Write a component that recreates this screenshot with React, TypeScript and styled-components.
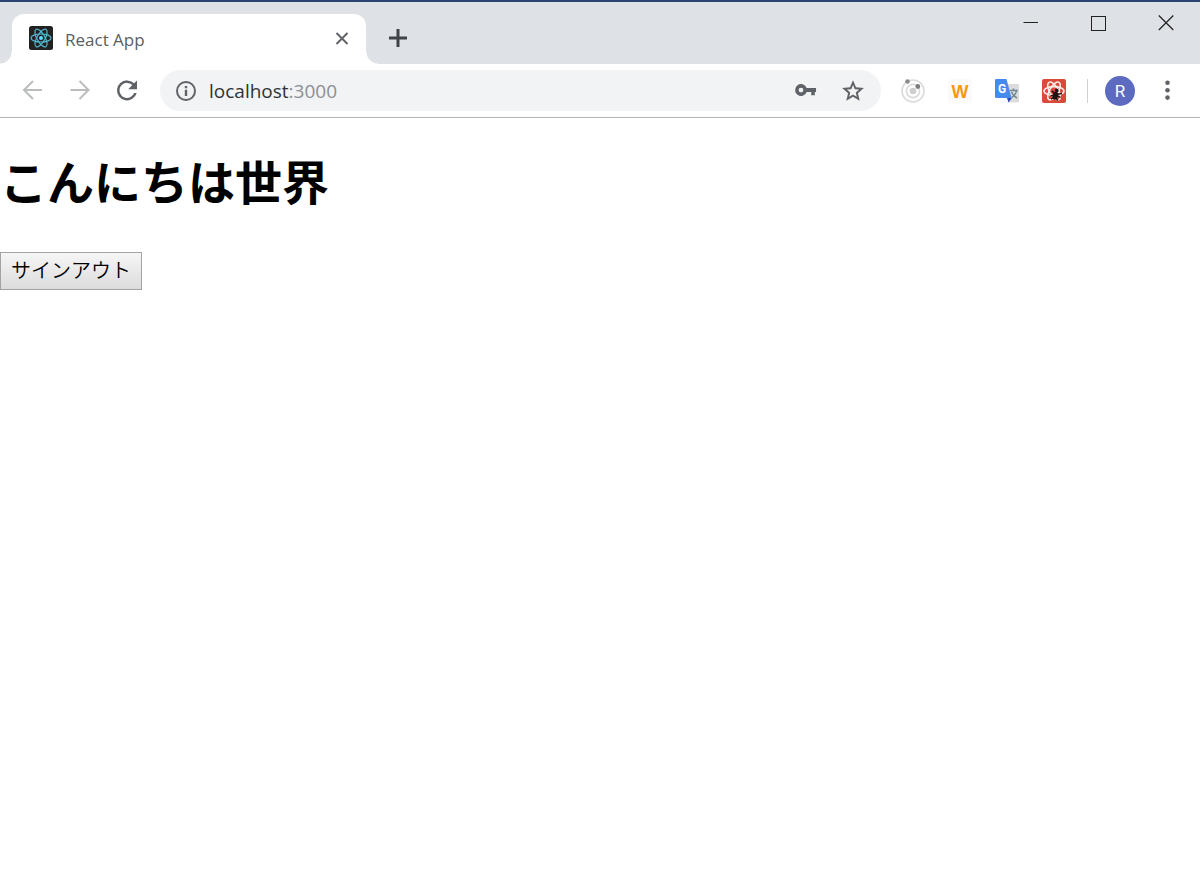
import React from 'react';
import styled, { createGlobalStyle } from 'styled-components';

const GlobalStyle = createGlobalStyle`
  * { box-sizing: border-box; }
  body { margin: 0; background: #fff; font-family: "Open Sans", "Noto Sans CJK JP", sans-serif; }
`;

const Browser = styled.div`
  display: flex;
  flex-direction: column;
  min-height: 100vh;
`;

const TabStrip = styled.header`
  display: flex;
  height: 64px;
  padding-left: 12px;
  background: #dee1e6;
  border-top: 2px solid #2c4270;
`;

const Tab = styled.div`
  position: relative;
  display: flex;
  align-items: center;
  align-self: flex-end;
  width: 354px;
  height: 50px;
  padding: 0 12px 2px 17px;
  gap: 12px;
  background: #fff;
  border-radius: 12px 12px 0 0;

  &::before,
  &::after {
    content: '';
    position: absolute;
    bottom: 0;
    width: 12px;
    height: 12px;
  }
  &::before {
    right: 100%;
    background: radial-gradient(circle at 0 0, #dee1e6 11px, #fff 12px);
  }
  &::after {
    left: 100%;
    background: radial-gradient(circle at 100% 0, #dee1e6 11px, #fff 12px);
  }
`;

const TabTitle = styled.span`
  flex: 1;
  padding-top: 4px;
  font-size: 17px;
  line-height: 24px;
  color: #5a5d61;
`;

const IconButton = styled.button<{ $width?: number; $color?: string }>`
  display: flex;
  align-items: center;
  justify-content: center;
  flex: none;
  width: ${(p) => p.$width ?? 47}px;
  height: 42px;
  padding: 0;
  border: 0;
  background: none;
  color: ${(p) => p.$color ?? '#5f6368'};

  svg { display: block; }
`;

const NewTab = styled(IconButton)`
  align-self: flex-end;
  margin: 0 0 5px 18px;
`;

const WindowControls = styled.div`
  display: flex;
  margin-left: auto;
`;

const Toolbar = styled.nav`
  display: flex;
  align-items: center;
  height: 54px;
  padding: 0 9px;
  border-bottom: 1px solid #b6b4b6;
`;

const AddressBar = styled.form`
  display: flex;
  align-items: center;
  flex: 1;
  min-width: 0;
  height: 41px;
  margin: 0 8px 0 10px;
  padding: 0 5px 0 2px;
  background: #f1f3f4;
  border-radius: 21px;
`;

const AddressField = styled.input<{ $color: string }>`
  field-sizing: content;
  flex: none;
  min-width: 0;
  padding: 0;
  border: 0;
  outline: 0;
  background: none;
  font-family: inherit;
  font-size: 19px;
  line-height: 28px;
  color: ${(p) => p.$color};
`;

const Spacer = styled.div`
  flex: 1;
`;

const Divider = styled.div`
  width: 1px;
  height: 24px;
  margin: 0 17px 0 10px;
  background: #cfd1d4;
`;

const Avatar = styled.button`
  flex: none;
  width: 30px;
  height: 30px;
  margin-right: 9px;
  padding: 0;
  border: 0;
  border-radius: 50%;
  background: #5c6bc0;
  color: #fff;
  font-family: Roboto, sans-serif;
  font-size: 17px;
  line-height: 30px;
`;

const Page = styled.main`
  flex: 1;
`;

const Heading = styled.h1`
  margin: 32px 0 38px;
  font-size: 47px;
  line-height: 64px;
  color: #000;
`;

const SignOutButton = styled.button`
  height: 38px;
  padding: 0 10px 2px;
  border: 1px solid #a3a3a3;
  border-radius: 0;
  background: linear-gradient(#f6f6f6, #dcdcdc);
  font-family: "Noto Sans CJK JP", sans-serif;
  font-size: 20px;
  font-weight: 350;
  line-height: 32px;
  color: #000;
`;

const Glyph = ({ d, size = 24 }: { d: string; size?: number }) => (
  <svg width={size} height={size} viewBox="0 0 24 24" fill="currentColor" aria-hidden="true">
    <path d={d} fillRule="evenodd" />
  </svg>
);

const ReactFavicon = () => (
  <svg width="24" height="24" viewBox="0 0 24 24" aria-hidden="true">
    <rect width="24" height="24" rx="2.5" fill="#222" />
    <g fill="none" stroke="#53b9d1" strokeWidth="1.2">
      {[0, 60, 120].map((a) => (
        <ellipse key={a} cx="12" cy="12" rx="10" ry="4" transform={`rotate(${a} 12 12)`} />
      ))}
    </g>
    <circle cx="12" cy="12" r="2" fill="#61dafb" />
  </svg>
);

const OrbitIcon = () => (
  <svg width="24" height="24" viewBox="0 0 24 24" aria-hidden="true">
    <g fill="none" stroke="#dadada" strokeWidth="1.6">
      <circle cx="12" cy="12" r="11" />
      <circle cx="12" cy="12" r="6.6" />
    </g>
    <circle cx="12" cy="12" r="3.3" fill="#cfcfcf" />
    <circle cx="6.5" cy="2.5" r="2.3" fill="#8a8a8a" />
    <circle cx="16.8" cy="7.5" r="2.4" fill="#7d7d7d" />
  </svg>
);

const LetterWIcon = () => (
  <svg width="24" height="24" viewBox="0 0 24 24" aria-hidden="true">
    <rect width="24" height="24" fill="#fafafa" />
    <text x="12" y="19" textAnchor="middle" fontFamily="Liberation Sans, sans-serif" fontWeight="700" fontSize="18" fill="#f9980f">W</text>
  </svg>
);

const TranslateIcon = () => (
  <svg width="24" height="24" viewBox="0 0 24 24" aria-hidden="true">
    <path d="M10 5h13a1 1 0 0 1 1 1v16.5a1 1 0 0 1-1 1H13.5z" fill="#dcdcdc" />
    <path d="M12 19h5l-3.500 4.500z" fill="#3349b8" />
    <path d="M1.200 0h10.300l5 19H1.200A1.200 1.200 0 0 1 0 17.800V1.200A1.200 1.200 0 0 1 1.200 0z" fill="#4889f0" />
    <path d="M14.800 11.500h8M18.500 9.500v2M21.500 11.500c-.5 3.200-2.500 5.500-5 7.200M16.500 13c1 2.600 3 4.700 5.500 6" fill="none" stroke="#6f8894" strokeWidth="1.500" />
    <text x="3" y="14" fontFamily="Roboto, sans-serif" fontWeight="700" fontSize="12" fill="#fff">G</text>
  </svg>
);

const ReactBugIcon = () => (
  <svg width="24" height="24" viewBox="0 0 24 24" aria-hidden="true">
    <rect width="24" height="24" rx="2" fill="#d94a3b" />
    <g fill="none" stroke="#fbe9e7" strokeWidth="1.600">
      {[0, 60, 120].map((a) => (
        <ellipse key={a} cx="12" cy="12" rx="10" ry="4.400" transform={`rotate(${a} 12 12)`} />
      ))}
    </g>
    <g transform="rotate(20 14 15)" fill="#1d1313" stroke="#1d1313">
      <ellipse cx="14" cy="16.800" rx="2.800" ry="4" stroke="none" />
      <circle cx="13.500" cy="11.500" r="1.900" stroke="none" />
      <path d="M9 13.500l4 1.500M9.500 18.500l3-1.500M11 21.500l1.500-2M19.500 12.500L15 15M19.500 16.500h-4M18 20.500L15.500 19" fill="none" strokeWidth="1.400" />
    </g>
  </svg>
);

export default function App() {
  return (
    <Browser>
      <GlobalStyle />
      <TabStrip>
        <Tab>
          <ReactFavicon />
          <TabTitle>React App</TabTitle>
          <IconButton $width={24} aria-label="Close tab">
            <svg width="24" height="24" fill="none" stroke="currentColor" strokeWidth="2">
              <path d="M6.500 7l11 11M17.500 7l-11 11" />
            </svg>
          </IconButton>
        </Tab>
        <NewTab $width={28} $color="#3f4347" aria-label="New tab">
          <svg width="20" height="20" fill="none" stroke="currentColor" strokeWidth="3">
            <path d="M10 1v18M1 10h18" />
          </svg>
        </NewTab>
        <WindowControls>
          <IconButton $width={68} $color="#222" aria-label="Minimize">
            <svg width="16" height="16" fill="none" stroke="currentColor">
              <path d="M1.500 7.500h14.500" />
            </svg>
          </IconButton>
          <IconButton $width={68} $color="#222" aria-label="Maximize">
            <svg width="16" height="16" fill="none" stroke="currentColor">
              <path d="M1 1h14v14h-14z" shapeRendering="crispEdges" />
            </svg>
          </IconButton>
          <IconButton $width={68} $color="#222" aria-label="Close window">
            <svg width="16" height="16" fill="none" stroke="currentColor" strokeWidth="1.200">
              <path d="M.800.500l14.500 14.500M15.300.500L.800 15" />
            </svg>
          </IconButton>
        </WindowControls>
      </TabStrip>
      <Toolbar>
        <IconButton $color="#babcbe" aria-label="Back">
          <svg width="24" height="24" fill="none" stroke="currentColor" strokeWidth="2">
            <path d="M21 11H3.500M12 2l-9 9 9 9" />
          </svg>
        </IconButton>
        <IconButton $color="#babcbe" aria-label="Forward">
          <svg width="24" height="24" fill="none" stroke="currentColor" strokeWidth="2">
            <path d="M2.500 11H20M11.500 2l9 9-9 9" />
          </svg>
        </IconButton>
        <IconButton aria-label="Reload">
          <Glyph size={30} d="M17.650 5.850A7.960 7.960 0 0 0 12 3.500a8 8 0 1 0 7.730 10h-2.080A6 6 0 1 1 12 5.500c1.660 0 3.140.690 4.220 1.780L13 10.500h7v-7z" />
        </IconButton>
        <AddressBar onSubmit={(e) => e.preventDefault()}>
          <IconButton type="button" aria-label="Site information">
            <Glyph d="M10.800 7h2.400v2.200h-2.400zM10.800 10.800h2.400V17h-2.400zM12 2a10 10 0 1 0 0 20 10 10 0 0 0 0-20zm0 18a8 8 0 1 1 0-16 8 8 0 0 1 0 16z" />
          </IconButton>
          <AddressField $color="#2f3337" aria-label="Host" defaultValue="localhost" />
          <AddressField $color="#8b8f94" aria-label="Port" defaultValue=":3000" />
          <Spacer />
          <IconButton type="button" aria-label="Saved passwords">
            <Glyph d="M13.200 9.500A6.200 6.200 0 1 0 13.200 13.500H18v3.500h3.700V13.500H23v-4zM7.300 14a2.500 2.500 0 1 1 0-5 2.500 2.500 0 0 1 0 5z" size={23} />
          </IconButton>
          <IconButton type="button" aria-label="Bookmark this page">
            <Glyph size={26} d="M22 9.240l-7.190-.620L12 2 9.190 8.630 2 9.240l5.460 4.730L5.820 21 12 17.270 18.180 21l-1.630-7.030zM12 15.200l-3.500 2.120.930-4-3.100-2.690 4.080-.350L12 6.500l1.590 3.780 4.080.350-3.100 2.690.930 4z" />
          </IconButton>
        </AddressBar>
        <IconButton aria-label="Orbit extension"><OrbitIcon /></IconButton>
        <IconButton aria-label="W extension"><LetterWIcon /></IconButton>
        <IconButton aria-label="Translate"><TranslateIcon /></IconButton>
        <IconButton aria-label="React developer tools"><ReactBugIcon /></IconButton>
        <Divider />
        <Avatar aria-label="Profile">R</Avatar>
        <IconButton aria-label="Menu">
          <svg width="6" height="22" viewBox="0 0 6 22" fill="currentColor">
            <circle cx="2.500" cy="2.800" r="2.300" />
            <circle cx="2.500" cy="10.200" r="2.300" />
            <circle cx="2.500" cy="17.600" r="2.300" />
          </svg>
        </IconButton>
      </Toolbar>
      <Page>
        <Heading lang="ja">こんにちは世界</Heading>
        <SignOutButton lang="ja">サインアウト</SignOutButton>
      </Page>
    </Browser>
  );
}
